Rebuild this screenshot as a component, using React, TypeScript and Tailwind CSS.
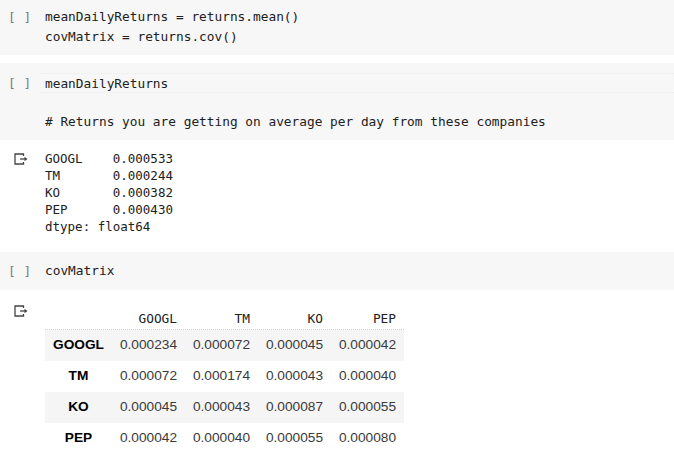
import React from "react";

const mono = { fontFamily: '"DejaVu Sans Mono", "Liberation Mono", monospace' };
const sans = { fontFamily: '"Liberation Sans", Arial, sans-serif' };

function OutIcon() {
  return (
    <svg width="14" height="12" viewBox="0 0 14 12" className="block">
      <path d="M9.5 3 V1 H1 V11 H9.5 V9" fill="none" stroke="#444" strokeWidth="1.3" />
      <path d="M6 6 H11" stroke="#444" strokeWidth="1.3" />
      <path d="M10.5 3.8 L13.5 6 L10.5 8.2 Z" fill="#444" />
    </svg>
  );
}

function CodeCell({ lines, pt, pb, highlightFirst }: { lines: string[]; pt: string; pb: string; highlightFirst?: boolean }) {
  return (
    <div className={`flex bg-[#f7f7f7] ${pt} ${pb} text-[12.8px] leading-[19.5px] text-[#212121]`} style={mono}>
      <div className="w-[45px] shrink-0 pl-[8px] text-[#7a7a7a] whitespace-pre">[ ]</div>
      <div className="flex-1">
        {lines.map((l, i) => (
          <div
            key={i}
            className={`whitespace-pre h-[19.5px] ${highlightFirst && i === 0 ? "border-y border-dotted border-[#ececec] -ml-[5px] pl-[5px]" : ""}`}
          >
            {l}
          </div>
        ))}
      </div>
    </div>
  );
}

const cols = ["GOOGL", "TM", "KO", "PEP"];
const data: [string, string[]][] = [
  ["GOOGL", ["0.000234", "0.000072", "0.000045", "0.000042"]],
  ["TM", ["0.000072", "0.000174", "0.000043", "0.000040"]],
  ["KO", ["0.000045", "0.000043", "0.000087", "0.000055"]],
  ["PEP", ["0.000042", "0.000040", "0.000055", "0.000080"]],
];

export default function App() {
  return (
    <div className="w-[674px] h-[465px] bg-white overflow-hidden">
      <CodeCell lines={["meanDailyReturns = returns.mean()", "covMatrix = returns.cov()"]} pt="pt-[7px]" pb="pb-[9px]" />
      <div className="h-[8px]" />
      <CodeCell
        lines={["meanDailyReturns", "", "# Returns you are getting on average per day from these companies"]}
        pt="pt-[10px]"
        pb="pb-[8.5px]"
        highlightFirst
      />
      <div className="flex pt-[9.5px] h-[112px]">
        <div className="w-[45px] shrink-0 pl-[14px] pt-[3px]">
          <OutIcon />
        </div>
        <div className="text-[12.5px] leading-[17.2px] text-[#212121] whitespace-pre" style={mono}>
          <div>GOOGL    0.000533</div>
          <div>TM       0.000244</div>
          <div>KO       0.000382</div>
          <div>PEP      0.000430</div>
          <div>dtype: float64</div>
        </div>
      </div>
      <CodeCell lines={["covMatrix"]} pt="pt-[9px]" pb="pb-[9.5px]" />
      <div className="flex pt-[14px]">
        <div className="w-[45px] shrink-0 pl-[14px] pt-[1px]">
          <OutIcon />
        </div>
        <div className="w-[359px]">
          <div className="grid grid-cols-[67px_73px_73px_73px_73px] h-[26px] border-b border-dotted border-[#c8d4c6] text-[12.8px] text-[#212121]" style={mono}>
            <div />
            {cols.map((c) => (
              <div key={c} className="flex items-center justify-end pr-[8px] pt-[4px] leading-[19.5px]">
                {c}
              </div>
            ))}
          </div>
          {data.map(([label, vals], i) => (
            <div
              key={label}
              className={`grid grid-cols-[67px_73px_73px_73px_73px] h-[31px] text-[13.7px] ${i % 2 === 0 ? "bg-[#f5f5f5]" : "bg-white"}`}
              style={sans}
            >
              <div className="flex items-center justify-center font-bold text-black">{label}</div>
              {vals.map((v, j) => (
                <div key={j} className="flex items-center justify-end pr-[8px] text-[#3a3a3a]">
                  {v}
                </div>
              ))}
            </div>
          ))}
        </div>
      </div>
    </div>
  );
}
